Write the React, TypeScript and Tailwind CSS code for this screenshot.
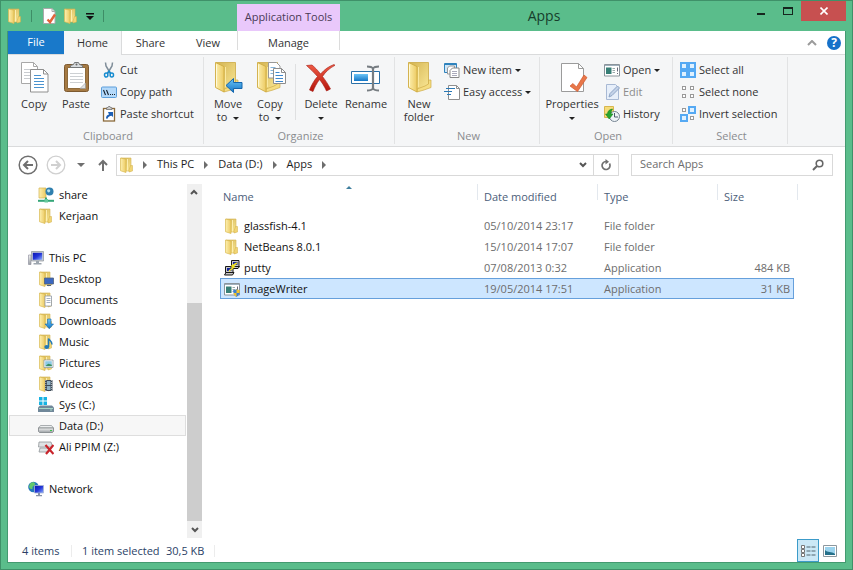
import type { ReactNode } from "react";

type IconProps = { children: ReactNode; size?: 16 | 32; className?: string };

function Icon({ children, size = 16, className = "" }: IconProps) {
  return (
    <svg
      viewBox={size === 16 ? "0 0 16 16" : "0 0 32 32"}
      className={`${size === 16 ? "size-4" : "size-8"} shrink-0 ${className}`}
      fill="none"
      aria-hidden="true"
    >
      {children}
    </svg>
  );
}

function Gradients() {
  return (
    <svg className="absolute size-0" aria-hidden="true">
      <defs>
        <linearGradient id="leaf" x1="0" y1="0" x2="1" y2="0">
          <stop offset="0" stopColor="#fdf0b0" />
          <stop offset="1" stopColor="#ecca62" />
        </linearGradient>
        <linearGradient id="back" x1="0" y1="0" x2="1" y2="1">
          <stop offset="0" stopColor="#d3b352" />
          <stop offset="1" stopColor="#fae896" />
        </linearGradient>
        <linearGradient id="blue" x1="0" y1="0" x2="0" y2="1">
          <stop offset="0" stopColor="#6cc5f7" />
          <stop offset="1" stopColor="#1476c6" />
        </linearGradient>
        <linearGradient id="red" x1="0" y1="0" x2="0" y2="1">
          <stop offset="0" stopColor="#ef5b45" />
          <stop offset="1" stopColor="#b5150c" />
        </linearGradient>
        <linearGradient id="screen" x1="0" y1="0" x2="1" y2="1">
          <stop offset="0" stopColor="#0a16b4" />
          <stop offset="0.5" stopColor="#2436d8" />
          <stop offset="1" stopColor="#8fb0ff" />
        </linearGradient>
        <linearGradient id="metal" x1="0" y1="0" x2="0" y2="1">
          <stop offset="0" stopColor="#f4f4f4" />
          <stop offset="1" stopColor="#9a9fa3" />
        </linearGradient>
      </defs>
    </svg>
  );
}

const smallFolder = (
  <>
    <path d="M2 1h10v13H6z" fill="url(#back)" stroke="#d3b350" strokeWidth=".6" />
    <path d="M11.500 8.500h2v5.500l-3.500 1v-2z" fill="#f1d573" stroke="#d0ae4a" strokeWidth=".5" />
    <path d="M1.500 1 7 2.200v13.300l-5.500-1.800z" fill="url(#leaf)" stroke="#d9b952" strokeWidth=".7" />
    <path d="M8.500 2v11.500" stroke="#fff2b8" strokeWidth=".9" />
  </>
);

const bigFolder = (
  <>
    <path d="M6 1.500h19.500V25l-12 5z" fill="url(#back)" stroke="#cba944" strokeWidth=".8" />
    <path d="M25.500 19h2.500v7.500L21 29l-7 2v-3l8-3 3.500-2z" fill="#f5dd82" stroke="#cfac49" strokeWidth=".7" />
    <path d="M5.500 1.500 14 5.500V31l-8.500-4.500z" fill="url(#leaf)" stroke="#cfab42" strokeWidth=".9" />
    <path d="M6.500 3.500v22" stroke="#fffad9" strokeWidth="1" />
    <path d="M15.500 6v20" stroke="#fbe9a0" strokeWidth="1" />
  </>
);

const FolderIcon = ({ children }: { children?: ReactNode }) => (
  <Icon>
    {smallFolder}
    {children}
  </Icon>
);

const CheckDoc = () => (
  <Icon>
    <path d="M2.500.5h8.500l3 3v12H2.500z" fill="#fff" stroke="#a9a9a9" />
    <path d="M11 .5v3h3" stroke="#a9a9a9" />
    <path d="M6.500 11.500 9 14l5-7.500" stroke="#e2643a" strokeWidth="2.400" />
  </Icon>
);

const CopyIcon = () => (
  <Icon size={32}>
    <path d="M3.500 1.500h12l4 4v17h-16z" fill="#fff" stroke="#a8a8a8" />
    <path d="M15.500 1.500v4h4" stroke="#a8a8a8" />
    <path d="M6 8.500h7M6 11.500h7M6 14.500h7M6 17.500h7" stroke="#c9ccd0" />
    <path d="M12.500 8.500h13l4.500 4.500v18H12.500z" fill="#fff" stroke="#8f8f8f" />
    <path d="M25.500 8.500V13H30" stroke="#8f8f8f" />
    <path d="M16 14.500h7M16 17.500h10M16 20.500h10M16 23.500h10M16 26.500h10" stroke="#4a93cf" />
  </Icon>
);

const PasteIcon = () => (
  <Icon size={32}>
    <rect x="4.500" y="3.500" width="24" height="27" rx="2" fill="#a67a43" stroke="#7d5a30" />
    <path d="M7.500 6.500h18v21h-18z" fill="#fff" stroke="#8d6b3c" />
    <path d="M10 12.500h13M10 15.500h13M10 18.500h13M10 21.500h13" stroke="#cdd0d3" />
    <path d="M20 27.500l5.500-5.500v5.500z" fill="#dfe2e4" stroke="#999" strokeWidth=".6" />
    <path d="M10.500 6.500V4.500l3-1 1-2h4l1 2 3 1v2z" fill="#d7dbde" stroke="#737779" />
    <circle cx="16.500" cy="3.500" r="1" fill="#666" />
  </Icon>
);

const CutIcon = () => (
  <Icon>
    <path d="M4.500.5 5 4l4.500 7.500M11.500.5 11 4l-4.500 7.500" stroke="#7f8d99" strokeWidth="1.500" />
    <ellipse cx="5.200" cy="13" rx="1.700" ry="2" stroke="#168cd0" strokeWidth="1.500" />
    <ellipse cx="10.800" cy="13" rx="1.700" ry="2" stroke="#168cd0" strokeWidth="1.500" />
    <path d="m6.300 11.500 1.700-2.500 1.700 2.500" stroke="#168cd0" strokeWidth="1.400" />
  </Icon>
);

const CopyPathIcon = () => (
  <Icon>
    <rect x=".5" y="3" width="15" height="10.500" rx="1" fill="#b4d9fa" stroke="#5d9fdb" />
    <path d="m2.500 6 2 5M5.500 6l2 5" stroke="#14202c" strokeWidth="1.100" />
    <path d="M9 10.500h1M11 10.500h1M13 10.500h1" stroke="#14202c" />
  </Icon>
);

const PasteShortcutIcon = () => (
  <Icon>
    <rect x="2.500" y="2.500" width="11" height="12.500" fill="#fff" stroke="#8b6a3b" strokeWidth="1.300" />
    <path d="M5.500 3.500V1.800l1.500-.3.500-1h1.500l.5 1 1.500.3v1.700z" fill="#ccc" stroke="#666" strokeWidth=".7" />
    <path d="M5 12.500C5 10 6 9 8 8.500L7 6h5v5l-1.500-1.200C8.500 10 7 11 6.500 12.800z" fill="#1d5fb4" />
  </Icon>
);

const MoveToIcon = () => (
  <Icon size={32}>
    <g transform="translate(-2 0)">{bigFolder}</g>
    <path d="m14 24.500 7.500-7v4h8.500v6h-8.500v4z" fill="url(#blue)" stroke="#1566ae" />
  </Icon>
);

const CopyToIcon = () => (
  <Icon size={32}>
    <g transform="translate(-2 0)">{bigFolder}</g>
    <path d="M14.500 1.500h8l3.500 3.500v12H14.500z" fill="#fff" stroke="#999" />
    <path d="M16.500 6.500h5M16.500 9.500h4M16.500 12.500h4" stroke="#83b5dc" />
    <path d="M19.500 7.500h8l4 4v11h-12z" fill="#fff" stroke="#8d8d8d" />
    <path d="M27.500 7.500v4h4" stroke="#8d8d8d" />
    <path d="M21.500 11.500h4M21.500 14.500h7.500M21.500 17.500h7.500M21.500 20.500h7.500" stroke="#3e87cc" />
  </Icon>
);

const DeleteIcon = () => (
  <Icon size={32}>
    <path
      d="M1.500 4.500 7 4c3 2.500 6 5.500 8.500 9 4-4.500 8-7.500 13.500-9.500l1 .8c-5.500 3-9.500 6.500-12.500 11.200 3 4 5.500 7.500 8 12.500L21.500 30c-2-4.500-4.500-8.500-7-11.500-3 4-5 8-6.500 12L4.500 29c2-5 4.500-9.500 8-13.500C9 11.500 5.500 8 1.500 4.500z"
      fill="url(#red)"
      stroke="#a41b12"
      strokeWidth=".6"
    />
  </Icon>
);

const RenameIcon = () => (
  <Icon size={32}>
    <path d="M1.500 10.500h28v12h-28z" fill="#fff" stroke="#2a70a8" />
    <path d="M4 13h14v7H4z" fill="url(#blue)" />
    <path
      d="M17 5.500c3 0 5 .5 6 2 1-1.500 3-2 6-2M17 29.500c3 0 5-.5 6-2 1 1.500 3 2 6 2M23 7.500v20"
      stroke="#777d82"
      strokeWidth="2.200"
    />
  </Icon>
);

const PropertiesIcon = () => (
  <Icon size={32}>
    <path d="M5.500 2.500h17l5 5v23h-22z" fill="#fff" stroke="#9b9b9b" />
    <path d="M22.500 2.500v5h5" stroke="#9b9b9b" />
    <path d="m14 25 3-2.500 3.500 3.500 7.500-12 3 2.500-9.500 14z" fill="#e8774a" stroke="#d1572b" strokeWidth=".7" />
  </Icon>
);

const NewItemIcon = () => (
  <Icon>
    <path d="M.5 1.500h12v9H.5z" fill="#cfe6f7" stroke="#2f83bd" />
    <path d="M.5 2.500h12" stroke="#2f83bd" />
    <path d="M3.500 6 5.500 4h5v8h-7z" fill="#fff" stroke="#999" />
    <path d="m6 8.500 2.500-2.500h6.500v9.500H6z" fill="#fff" stroke="#888" />
    <path d="M8 9.500h5M8 11.500h5M8 13.500h5" stroke="#aab" />
  </Icon>
);

const EasyAccessIcon = () => (
  <Icon>
    <path d="M4.500 1.500h8l3 3v11h-11z" fill="#fff" stroke="#8f8f8f" />
    <path d="M12.500 1.500v3h3" stroke="#8f8f8f" />
    <path d="M2 4.500h9M0 7.500h8M3 10.500h4" stroke="#2a78b5" strokeWidth="1.200" />
  </Icon>
);

const windowArt = (
  <>
    <path d="M.5 2.500h15v11.500H.5z" fill="#fff" stroke="#8b949b" />
    <path d="M1 3.500h14" stroke="#9fb0bd" />
    <path d="M2 5.500h5.500V12H2z" fill="#377f76" />
    <path d="M8.500 6.500H11M8.500 8.500H11M8.500 10.500H11" stroke="#9aa" />
    <path d="M13.500 5.500v4M13.500 11v1" stroke="#667" />
  </>
);

const OpenIcon = () => <Icon>{windowArt}</Icon>;

const EditIcon = () => (
  <Icon>
    <path d="M2.500.5h9l3 3v12h-12z" fill="#e7effa" stroke="#a8b9d4" />
    <path d="m5 13 1-3.500L13.500 2l2 2-7.500 7.500z" fill="#c3d2e8" stroke="#8fa5c6" />
  </Icon>
);

const HistoryIcon = () => (
  <Icon>
    <path d="M.5.5h9v11h-9z" fill="#f6dc79" stroke="#d7b64e" />
    <circle cx="10.500" cy="10.500" r="5" fill="#eef3f7" stroke="#748391" />
    <path d="M10.500 7v4H14" stroke="#4c5b68" />
    <path d="M1.500 8h2c0-3 2-4.500 5-5C7.500 4.500 7 6 7 8h2l-3.800 5z" fill="#27a52f" stroke="#14831e" strokeWidth=".6" />
  </Icon>
);

const TILES = [
  [1, 1],
  [9, 1],
  [1, 9],
  [9, 9],
];

function TilesIcon({ picked }: { picked: boolean[] }) {
  return (
    <Icon>
      {TILES.map(([x, y], i) =>
        picked[i] ? (
          <g key={i}>
            <rect x={x - 1} y={y - 1} width="8" height="8" fill="#55a9f3" />
            <rect x={x + 1} y={y + 1} width="4" height="4" fill="#dff1ff" />
          </g>
        ) : (
          <rect key={i} x={x + 1.5} y={y + 1.5} width="3" height="3" fill="#fff" stroke="#999" />
        ),
      )}
    </Icon>
  );
}

const PcIcon = () => (
  <Icon>
    <path d="M.5 5h2.500v9.500H.5z" fill="url(#metal)" stroke="#889" strokeWidth=".6" />
    <path d="M3.500 1.500h12v9.500h-12z" fill="#c8cdd2" stroke="#8d949b" strokeWidth=".7" />
    <path d="M4.800 2.800h9.400v7H4.800z" fill="url(#screen)" />
    <path d="M8 11h3v2h2.500v1.500h-8V13H8z" fill="#9da6af" />
  </Icon>
);

const ShareIcon = () => (
  <Icon>
    <path d="M1 1h7v10H1z" fill="url(#leaf)" stroke="#d3b24d" strokeWidth=".7" />
    <circle cx="11.500" cy="4.500" r="4" fill="#2f7fae" />
    <path d="M9 3c2-2 4 0 3 1.500S9.500 6 9 3z" fill="#b7e3ef" />
    <path d="M8 10.500v3" stroke="#35a678" strokeWidth="2" />
    <path d="M0 13.800h16" stroke="#35a678" strokeWidth="2" />
    <path d="M6.500 12h3.500v3.500H6.500z" fill="#67c99b" />
  </Icon>
);

const NetworkIcon = () => (
  <Icon>
    <circle cx="5.500" cy="6" r="5.300" fill="#2379bb" />
    <path d="M2 2.500c2-2 5-1.500 5 .5S4 5 4.500 7 1.500 8 1 6z" fill="#64c96c" />
    <path d="M6.500 4.500h9V12h-9z" fill="url(#screen)" stroke="#a9b6d2" strokeWidth=".8" />
    <path d="M10 12h2v2h2v1.200H8V14h2z" fill="#8691a8" />
  </Icon>
);

const driveArt = (
  <>
    <path d="M2.500 7.500h11l2 2.500H.5z" fill="#eceeef" stroke="#8b9093" strokeWidth=".7" />
    <path d="M.5 10h15v3.500l-1 1h-13l-1-1z" fill="url(#metal)" stroke="#7e8386" strokeWidth=".8" />
    <path d="M12 12.500h2" stroke="#36c44a" strokeWidth="1.200" />
  </>
);

const DataDriveIcon = () => <Icon>{driveArt}</Icon>;

const SystemDriveIcon = () => (
  <Icon>
    <path d="M2 8.500h12l2 2V15H0v-4.500z" fill="#71889a" />
    <path d="M1 11.500h14M12 13h2" stroke="#a6d6c6" />
    <path d="M1 0h3.500v3.500H1zM5.500 0H9v3.500H5.500zM1 4.500h3.500V8H1zM5.500 4.500H9V8H5.500z" fill="#16b2e2" />
  </Icon>
);

const BrokenDriveIcon = () => (
  <Icon>
    <path d="M1 3h12l1.500 5H.5zM2 9h9v4H1z" fill="#dfe2e4" stroke="#92979a" strokeWidth=".8" />
    <path d="m7.500 6 8 9M15.500 6l-7.500 9" stroke="#c9242b" strokeWidth="2.200" />
  </Icon>
);

const PuttyIcon = () => (
  <Icon>
    <path d="M7.500.5h7.500v6H7.500zM6.500 8.500H14l1.500-2h-8zM1.500 6.500H9v6H1.500zM.5 15h8L10 12.500H2z" fill="#c6c6c6" stroke="#161616" />
    <path d="M9 2h4.500v3H9zM3 8h4.500v3H3z" fill="#15259b" />
    <path d="m13 3-5 3 2 1-5 4" stroke="#f2e21b" strokeWidth="1.600" />
  </Icon>
);

const ImageWriterIcon = () => (
  <Icon>
    {windowArt}
    <path d="M12.500 8c1 .8 2 1 3.300 1 0 3-.8 5.500-3.300 7-2.500-1.500-3.300-4-3.300-7 1.300 0 2.300-.2 3.300-1z" fill="#3c7fd0" />
    <path d="M12.500 8v4h3c.2-1 .3-2 .3-3-1.300 0-2.300-.2-3.300-1zM12.500 12v4c-1.700-1-2.600-2.400-3-4z" fill="#f2c52e" />
  </Icon>
);

const Caret = ({ className = "text-[#222]" }: { className?: string }) => (
  <svg viewBox="0 0 6 3" className={`inline-block h-[3px] w-[6px] shrink-0 align-middle ${className}`} aria-hidden="true">
    <path d="M0 0h6L3 3z" fill="currentColor" />
  </svg>
);

function LargeButton({
  icon,
  label,
  caret,
  className = "w-[42px]",
}: {
  icon: ReactNode;
  label: string;
  caret?: boolean;
  className?: string;
}) {
  return (
    <button type="button" className={`flex shrink-0 flex-col items-center pt-[2px] ${className}`}>
      {icon}
      <span className="mt-1 w-min text-center leading-[13px]">
        {label} {caret && <Caret />}
      </span>
    </button>
  );
}

function SmallButton({
  icon,
  label,
  caret,
  disabled,
}: {
  icon: ReactNode;
  label: string;
  caret?: boolean;
  disabled?: boolean;
}) {
  return (
    <button
      type="button"
      disabled={disabled}
      className="flex h-[22px] items-center gap-[3px] whitespace-nowrap disabled:text-[#8c8c8c]"
    >
      {icon}
      <span>{label}</span>
      {caret && <Caret />}
    </button>
  );
}

function Group({ name, className, children }: { name: string; className: string; children: ReactNode }) {
  return (
    <section aria-label={name} className={`flex shrink-0 flex-col border-r border-[#e2e3e4] ${className}`}>
      <div className="flex flex-1 pt-[2px]">{children}</div>
      <div className="text-center leading-4 text-[#8a8c8f]">{name}</div>
    </section>
  );
}

const Stack = ({ children }: { children: ReactNode }) => <div className="flex flex-col items-start pl-1">{children}</div>;

function TitleBar() {
  return (
    <header className="flex h-[30px] shrink-0 pl-[6px]">
      <div className="flex w-[230px] shrink-0 items-center">
        <FolderIcon />
        <span className="ml-2 h-3 w-px bg-[#3e8d66]" />
        <button type="button" aria-label="Properties" className="ml-[9px]">
          <CheckDoc />
        </button>
        <button type="button" aria-label="New folder" className="ml-[6px]">
          <FolderIcon />
        </button>
        <button type="button" aria-label="Customize Quick Access Toolbar" className="ml-[7px]">
          <svg viewBox="0 0 8 7" className="h-[7px] w-2" aria-hidden="true">
            <path d="M0 0h8v1.500H0zM0 3h8L4 7z" fill="#111" />
          </svg>
        </button>
        <span className="ml-[9px] h-3 w-px bg-[#3e8d66]" />
      </div>
      <div className="mt-[3px] flex w-[103px] shrink-0 items-center justify-center whitespace-nowrap bg-[#e9c8fb] text-[#4a3a56]">
        Application Tools
      </div>
      <h1 className="flex-1 text-center text-sm leading-[30px] text-[#173d2c]">Apps</h1>
      <div className="flex h-5 shrink-0">
        <button type="button" aria-label="Minimize" className="flex w-[26px] justify-center pt-3">
          <span className="h-[2px] w-2 bg-[#16261e]" />
        </button>
        <button type="button" aria-label="Maximize" className="flex w-[27px] justify-center pt-[6px]">
          <span className="h-2 w-[10px] border border-t-2 border-[#16261e]" />
        </button>
        <button type="button" aria-label="Close" className="flex w-[45px] items-center justify-center bg-[#c75050]">
          <svg viewBox="0 0 8 8" className="size-2" aria-hidden="true">
            <path d="m.5.5 7 7m0-7-7 7" stroke="#fff" strokeWidth="1.600" />
          </svg>
        </button>
      </div>
      <div className="w-[6px] shrink-0" />
    </header>
  );
}

function Tabs() {
  return (
    <nav className="flex h-6 shrink-0 items-stretch border-b border-[#dadbdc] bg-white">
      <button type="button" className="w-14 bg-[#1979ca] text-white">
        File
      </button>
      <button type="button" className="-mb-px w-[58px] border-r border-[#dadbdc] bg-[#f5f6f7] pt-px">
        Home
      </button>
      <button type="button" className="w-[57px] pt-px">
        Share
      </button>
      <button type="button" className="w-[58px] pt-px">
        View
      </button>
      <button type="button" className="mb-1 w-[103px] border-x border-[#dcdcdc] pt-1">
        Manage
      </button>
      <div className="flex flex-1 items-center justify-end gap-[10px] pr-1">
        <button type="button" aria-label="Minimize the Ribbon">
          <svg viewBox="0 0 10 6" className="h-[6px] w-[10px]" fill="none" aria-hidden="true">
            <path d="m1 5 4-4 4 4" stroke="#9b9b9b" strokeWidth="2" />
          </svg>
        </button>
        <button
          type="button"
          aria-label="Help"
          className="flex size-[14px] items-center justify-center rounded-full bg-[#1671c9] text-xs font-bold text-white"
        >
          ?
        </button>
      </div>
    </nav>
  );
}

function Ribbon() {
  return (
    <div className="flex h-[92px] shrink-0 overflow-hidden border-b border-[#dadbdc] bg-[#f5f6f7] pt-[2px] pb-[2px]">
      <Group name="Clipboard" className="w-[196px] pl-[5px]">
        <LargeButton icon={<CopyIcon />} label="Copy" />
        <LargeButton icon={<PasteIcon />} label="Paste" />
        <Stack>
          <SmallButton icon={<CutIcon />} label="Cut" />
          <SmallButton icon={<CopyPathIcon />} label="Copy path" />
          <SmallButton icon={<PasteShortcutIcon />} label="Paste shortcut" />
        </Stack>
      </Group>
      <Group name="Organize" className="w-[191px] pl-[3px]">
        <LargeButton icon={<MoveToIcon />} label={"Move to\u00a0"} caret />
        <LargeButton icon={<CopyToIcon />} label={"Copy to\u00a0"} caret />
        <span className="mx-1 mt-[5px] h-14 w-px bg-[#dfe0e1]" />
        <LargeButton icon={<DeleteIcon />} label="Delete" caret />
        <LargeButton icon={<RenameIcon />} label="Rename" className="w-12" />
      </Group>
      <Group name="New" className="w-[145px] pl-[3px]">
        <LargeButton icon={<Icon size={32}>{bigFolder}</Icon>} label="New folder" />
        <Stack>
          <SmallButton icon={<NewItemIcon />} label="New item" caret />
          <SmallButton icon={<EasyAccessIcon />} label="Easy access" caret />
        </Stack>
      </Group>
      <Group name="Open" className="w-[133px] pl-1">
        <LargeButton icon={<PropertiesIcon />} label="Properties" caret className="w-14" />
        <Stack>
          <SmallButton icon={<OpenIcon />} label="Open" caret />
          <SmallButton icon={<EditIcon />} label="Edit" disabled />
          <SmallButton icon={<HistoryIcon />} label="History" />
        </Stack>
      </Group>
      <Group name="Select" className="w-[115px] pl-[3px]">
        <Stack>
          <SmallButton icon={<TilesIcon picked={[true, true, true, true]} />} label="Select all" />
          <SmallButton icon={<TilesIcon picked={[false, false, false, false]} />} label="Select none" />
          <SmallButton icon={<TilesIcon picked={[false, true, true, false]} />} label="Invert selection" />
        </Stack>
      </Group>
    </div>
  );
}

const Chevron = () => (
  <svg viewBox="0 0 4 8" className="h-2 w-1 shrink-0" aria-hidden="true">
    <path d="M0 0v8l4-4z" fill="#6d6d6d" />
  </svg>
);

const DownArrow = () => (
  <svg viewBox="0 0 8 6" className="h-[6px] w-2" fill="none" aria-hidden="true">
    <path d="m1 1 3 3 3-3" stroke="#555" strokeWidth="2" />
  </svg>
);

function AddressBar() {
  return (
    <div className="flex h-[37px] shrink-0 items-center pr-3 pb-[2px] pl-[10px] text-[#1e1e1e]">
      <button type="button" aria-label="Back">
        <svg viewBox="0 0 20 20" className="size-5" fill="none" aria-hidden="true">
          <circle cx="10" cy="10" r="8.800" stroke="#6f6f6f" strokeWidth="1.500" />
          <path d="M15 10H6m4-4-4 4 4 4" stroke="#6f6f6f" strokeWidth="2" />
        </svg>
      </button>
      <button type="button" aria-label="Forward" className="ml-2">
        <svg viewBox="0 0 20 20" className="size-5" fill="none" aria-hidden="true">
          <circle cx="10" cy="10" r="8.800" stroke="#d0d0d0" strokeWidth="1.300" />
          <path d="M5 10h9m-4-4 4 4-4 4" stroke="#d0d0d0" strokeWidth="2" />
        </svg>
      </button>
      <button type="button" aria-label="Recent locations" className="ml-[11px] flex">
        <svg viewBox="0 0 8 4" className="h-1 w-2" aria-hidden="true">
          <path d="M0 0h8L4 4z" fill="#6f6f6f" />
        </svg>
      </button>
      <button type="button" aria-label="Up" className="ml-[13px]">
        <svg viewBox="0 0 10 12" className="h-3 w-[10px]" fill="none" aria-hidden="true">
          <path d="M5 12V2M1 6l4-4 4 4" stroke="#707070" strokeWidth="2" />
        </svg>
      </button>
      <div className="ml-2 flex h-[22px] flex-1 items-stretch border border-[#d9d9d9]">
        <div className="flex flex-1 items-center pl-[2px]">
          <FolderIcon />
          <span className="ml-2 flex items-center gap-[10px]">
            <Chevron />
            <button type="button">This PC</button>
            <Chevron />
            <button type="button">Data (D:)</button>
            <Chevron />
            <button type="button">Apps</button>
            <Chevron />
          </span>
        </div>
        <button type="button" aria-label="Previous locations" className="flex w-5 items-center justify-center">
          <DownArrow />
        </button>
        <button
          type="button"
          aria-label="Refresh"
          className="flex w-[25px] items-center justify-center border-l border-[#d9d9d9]"
        >
          <svg viewBox="0 0 12 12" className="size-3" fill="none" aria-hidden="true">
            <path d="M9.500 4.500A4 4 0 1 1 6 2.500" stroke="#707070" strokeWidth="1.700" />
            <path d="M5.500 0 9 2.700 5.500 5.500z" fill="#707070" />
          </svg>
        </button>
      </div>
      <label className="ml-3 flex h-[22px] w-[202px] shrink-0 items-center border border-[#d9d9d9] pr-2 pl-2">
        <input
          type="search"
          aria-label="Search Apps"
          placeholder="Search Apps"
          className="min-w-0 flex-1 bg-transparent outline-none placeholder:text-[#6d6d6d]"
        />
        <svg viewBox="0 0 12 12" className="size-3" fill="none" aria-hidden="true">
          <circle cx="7.500" cy="4.500" r="3.300" stroke="#666" strokeWidth="1.600" />
          <path d="M5 7 1 11" stroke="#666" strokeWidth="2" />
        </svg>
      </label>
    </div>
  );
}

type NavItem = { label: string; icon: ReactNode; root?: boolean; selected?: boolean; spaced?: boolean };

const NAV: NavItem[] = [
  { label: "share", icon: <ShareIcon /> },
  { label: "Kerjaan", icon: <FolderIcon /> },
  { label: "This PC", icon: <PcIcon />, root: true, spaced: true },
  {
    label: "Desktop",
    icon: (
      <FolderIcon>
        <path d="M6.500 7h9v6h-9z" fill="#3b67c0" stroke="#51627c" strokeWidth=".8" />
        <path d="M9 14.500h4" stroke="#51627c" />
      </FolderIcon>
    ),
  },
  {
    label: "Documents",
    icon: (
      <FolderIcon>
        <path d="M7 4h6.500v10H7z" fill="#fff" stroke="#8f98a3" strokeWidth=".8" />
        <path d="M8.500 6.500h4M8.500 8.500h4M8.500 10.500h4" stroke="#90a0b8" strokeWidth=".8" />
      </FolderIcon>
    ),
  },
  {
    label: "Downloads",
    icon: (
      <FolderIcon>
        <path d="M9.500 6h3.500v5h2.500l-4.200 4.700L7 11h2.500z" fill="url(#blue)" stroke="#1a68a8" strokeWidth=".6" />
      </FolderIcon>
    ),
  },
  {
    label: "Music",
    icon: (
      <FolderIcon>
        <path d="M10.500 13V4.500c1 2 3.500 2.500 3.500 6" stroke="#2379b5" strokeWidth="1.500" />
        <ellipse cx="8.700" cy="13" rx="2.400" ry="1.900" fill="#2379b5" />
      </FolderIcon>
    ),
  },
  {
    label: "Pictures",
    icon: (
      <FolderIcon>
        <path d="M6 5h9v7.500H6z" fill="#fff" stroke="#8d99a3" strokeWidth=".8" />
        <path d="M7.200 6.200h6.600v5H7.200z" fill="#8cc9e4" />
        <path d="m7.200 11.200 3-2.500 3.600 1v1.500z" fill="#3c8f63" />
      </FolderIcon>
    ),
  },
  {
    label: "Videos",
    icon: (
      <FolderIcon>
        <path d="M7 4h7.500v11H7z" fill="#3c4a58" />
        <path d="M9 5h3.500v4H9zM9 10h3.500v4H9z" fill="#8fb0c4" />
        <path d="M7.800 4v11M13.700 4v11" stroke="#e7e7e7" strokeWidth=".8" strokeDasharray="1 1" />
      </FolderIcon>
    ),
  },
  { label: "Sys (C:)", icon: <SystemDriveIcon /> },
  { label: "Data (D:)", icon: <DataDriveIcon />, selected: true },
  { label: "Ali PPIM (Z:)", icon: <BrokenDriveIcon /> },
  { label: "Network", icon: <NetworkIcon />, root: true, spaced: true },
];

function Sidebar() {
  return (
    <aside className="flex w-[194px] shrink-0">
      <ul className="flex-1 overflow-hidden pr-px pl-px">
        {NAV.map(({ label, icon, root, selected, spaced }) => (
          <li key={label} className={spaced ? "mt-[21px]" : ""}>
            <button
              type="button"
              className={`flex h-[21px] w-full items-center border whitespace-nowrap ${
                root ? "gap-[5px] pl-[18px]" : "gap-[5px] pl-7"
              } ${selected ? "border-[#dedede] bg-[#f7f7f7]" : "border-transparent"}`}
            >
              {icon}
              <span className="pt-[2px]">{label}</span>
            </button>
          </li>
        ))}
      </ul>
      <div className="mb-px flex w-[15px] flex-col bg-[#f0f0f0]">
        <span className="flex h-[17px] rotate-180 items-center justify-center">
          <DownArrow />
        </span>
        <span className="basis-[102px]" />
        <span className="flex-1 bg-[#cdcdcd]" />
        <span className="flex h-[17px] items-center justify-center">
          <DownArrow />
        </span>
      </div>
    </aside>
  );
}

const FILES = [
  { name: "glassfish-4.1", date: "05/10/2014 23:17", type: "File folder", size: "", icon: <FolderIcon /> },
  { name: "NetBeans 8.0.1", date: "15/10/2014 17:07", type: "File folder", size: "", icon: <FolderIcon /> },
  { name: "putty", date: "07/08/2013 0:32", type: "Application", size: "484 KB", icon: <PuttyIcon /> },
  {
    name: "ImageWriter",
    date: "19/05/2014 17:51",
    type: "Application",
    size: "31 KB",
    icon: <ImageWriterIcon />,
    selected: true,
  },
];

const COLUMNS = [
  { label: "Name", className: "w-[258px] pl-[3px]" },
  { label: "Date modified", className: "w-[120px] pl-[6px]" },
  { label: "Type", className: "w-[120px] pl-[6px]" },
  { label: "Size", className: "w-[76px] pl-[6px]" },
];

function FileList() {
  return (
    <main className="flex-1 pl-[18px]">
      <table className="w-[578px] table-fixed border-separate border-spacing-0 text-left">
        <thead>
          <tr>
            {COLUMNS.map(({ label, className }, i) => (
              <th key={label} scope="col" className={`relative h-[31px] p-0 pb-1 font-normal text-[#4c607a] ${className}`}>
                {label}
                {i === 0 && (
                  <svg viewBox="0 0 6 3" className="absolute inset-x-0 top-[2px] mx-auto h-[3px] w-[6px]" aria-hidden="true">
                    <path d="M0 3h6L3 0z" fill="#3f7f9e" />
                  </svg>
                )}
                {i < 3 && <span className="absolute top-0 right-0 h-4 w-px bg-[#e3e8ee]" />}
              </th>
            ))}
            <td className="relative w-1 p-0">
              <span className="absolute top-0 right-0 h-4 w-px bg-[#e3e8ee]" />
            </td>
          </tr>
        </thead>
        <tbody className="text-[#6d6d6d]">
          {FILES.map(({ name, date, type, size, icon, selected }) => {
            const cell = selected ? "border-y border-[#66a0dc] bg-[#cde6ff]" : "border-y border-transparent";
            return (
              <tr key={name} className="h-[21px]">
                <td className={`p-0 ${selected ? "border-l" : "pl-px"} ${cell}`}>
                  <span className="flex h-[19px] items-center gap-1 pl-[3px] text-[#111]">
                    {icon}
                    <span className="pt-[2px]">{name}</span>
                  </span>
                </td>
                <td className={`p-0 pt-[2px] pl-[6px] ${cell}`}>{date}</td>
                <td className={`p-0 pt-[2px] pl-[6px] ${cell}`}>{type}</td>
                <td className={`p-0 pt-[2px] text-right ${selected ? "border-r pr-[3px]" : "pr-1"} ${cell}`}>{size}</td>
                <td className="p-0" />
              </tr>
            );
          })}
        </tbody>
      </table>
    </main>
  );
}

function StatusBar() {
  return (
    <footer className="flex h-[23px] shrink-0 items-center pr-2 pl-[14px] text-[#2b3f66]">
      <span className="w-[49px] pt-[2px]">4 items</span>
      <span className="h-3 w-px bg-[#ececec]" />
      <span className="ml-[10px] w-[84px] pt-[2px]">1 item selected</span>
      <span className="w-12 pt-[2px]">30,5 KB</span>
      <span className="h-3 w-px bg-[#ececec]" />
      <div className="ml-auto flex h-full items-center gap-1">
        <button
          type="button"
          aria-label="Details view"
          className="flex h-full w-[22px] items-center justify-center border border-[#3c9bc9] bg-[#cbe8f6]"
        >
          <Icon>
            <path d="M1.500 2.500h3v3h-3zM1.500 6.500h3v3h-3zM1.500 10.500h3v3h-3z" fill="#fff" stroke="#777" />
            <path d="M6.500 4h4M11.500 4h4M6.500 8h4M11.500 8h4M6.500 12h4M11.500 12h4" stroke="#51646f" />
          </Icon>
        </button>
        <button type="button" aria-label="Large icons view">
          <svg viewBox="0 0 14 12" className="h-3 w-[14px]" aria-hidden="true">
            <path d="M.5.5h13v11H.5z" fill="#fff" stroke="#8c979e" />
            <path d="M2 2h10v8H2z" fill="#9bd3ee" />
            <path d="M2 5c3 3 6 1 10 4v1H2z" fill="#25708a" />
          </svg>
        </button>
      </div>
    </footer>
  );
}

export default function App() {
  return (
    <div className="flex h-screen min-h-0 flex-col overflow-hidden border border-[#3f9169] bg-[#5abd8b] font-['Open_Sans','Noto_Sans',sans-serif] text-[11px] text-[#333]">
      <Gradients />
      <TitleBar />
      <div className="mx-[6px] mb-[6px] flex min-h-0 flex-1 flex-col border-x border-b border-[#449a70] bg-white">
        <Tabs />
        <Ribbon />
        <AddressBar />
        <div className="flex min-h-0 flex-1 text-[#111]">
          <Sidebar />
          <FileList />
        </div>
        <StatusBar />
      </div>
    </div>
  );
}
